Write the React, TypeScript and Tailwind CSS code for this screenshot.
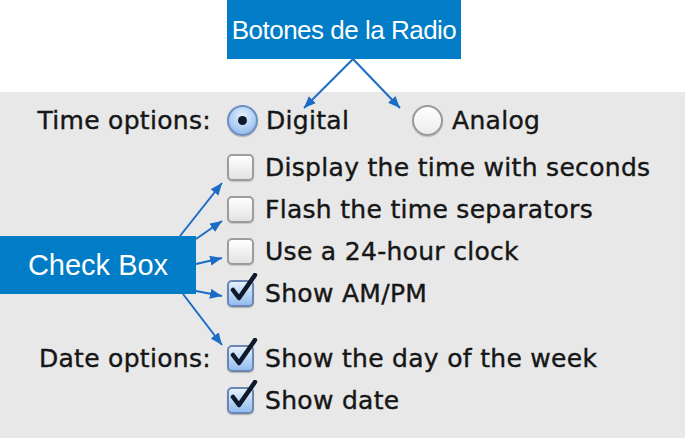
const rowText =
  "text-[25px] tracking-[0.3px] text-[#161616] leading-none [-webkit-text-stroke:0.4px_#161616]";

function Radio({ checked }: { checked?: boolean }) {
  return (
    <span
      className={
        checked
          ? "flex h-[31px] w-[31px] items-center justify-center rounded-full border-2 border-[#6f8fbf] bg-[radial-gradient(circle_at_50%_35%,#e6f1fd_0%,#a9cbf2_60%,#7fadea_100%)] shadow-[0_1px_1px_rgba(0,0,0,0.25)]"
          : "flex h-[31px] w-[31px] items-center justify-center rounded-full border-2 border-[#9a9a9a] bg-[linear-gradient(#ffffff,#ececec)] shadow-[0_1px_1px_rgba(0,0,0,0.2)]"
      }
    >
      {checked && <span className="h-[9px] w-[9px] rounded-full bg-[#0f1b2e]" />}
    </span>
  );
}

function Check({ checked }: { checked?: boolean }) {
  return (
    <span className="relative flex h-[28px] w-[28px] items-center justify-start">
      <span
        className={
          checked
            ? "h-[27px] w-[27px] rounded-[5px] border-2 border-[#6a87b4] bg-[linear-gradient(#e4f0fd,#b7d3f5_55%,#96bdee)] shadow-[0_1px_1px_rgba(0,0,0,0.25)]"
            : "h-[27px] w-[27px] rounded-[5px] border-2 border-[#9c9c9c] bg-[linear-gradient(#ffffff,#eeeeee_60%,#e2e2e2)] shadow-[0_1px_1px_rgba(0,0,0,0.15)]"
        }
      />
      {checked && (
        <svg
          className="absolute left-0 top-[-6px]"
          width="32"
          height="32"
          viewBox="0 0 32 32"
        >
          <path
            d="M6 17 L12 25 L28 2"
            fill="none"
            stroke="#0e1a2c"
            strokeWidth="4.5"
            strokeLinecap="round"
            strokeLinejoin="round"
          />
        </svg>
      )}
    </span>
  );
}

function Row({
  label,
  className,
  children,
}: {
  label?: string;
  className?: string;
  children: React.ReactNode;
}) {
  return (
    <div className={"flex h-[42px] items-center " + (className ?? "")}>
      <div className={"w-[211px] text-right " + rowText}>{label}</div>
      <div className="ml-[16px] flex items-center">{children}</div>
    </div>
  );
}

function CheckRow({
  label,
  text,
  checked,
  className,
}: {
  label?: string;
  text: string;
  checked?: boolean;
  className?: string;
}) {
  return (
    <Row label={label} className={className}>
      <Check checked={checked} />
      <span className={"ml-[10px] " + rowText}>{text}</span>
    </Row>
  );
}

export default function App() {
  // annotation arrows: [x1, y1, x2, y2]
  const arrows: [number, number, number, number][] = [
    [353, 59, 304, 108],
    [353, 59, 400, 108],
    [180, 236, 222, 183],
    [196, 239, 222, 221],
    [196, 264, 222, 258],
    [196, 291, 222, 296],
    [183, 294, 222, 345],
  ];

  return (
    <div className="relative h-[438px] w-[685px] overflow-hidden bg-white font-['DejaVu_Sans',sans-serif]">
      <div className="h-[92px] pl-[227px]">
        <div className="flex h-[59px] w-[234px] items-center justify-center bg-[#007dc6] font-['Liberation_Sans',Arial,sans-serif] text-[26px] leading-none tracking-[-0.5px] text-white">
          Botones de la Radio
        </div>
      </div>

      <div className="h-[346px] bg-[#e8e8e8] pt-[7px]">
        <Row label="Time options:">
          <div className="flex w-[185px] items-center">
            <Radio checked />
            <span className={"ml-[8px] " + rowText}>Digital</span>
          </div>
          <Radio />
          <span className={"ml-[9px] " + rowText}>Analog</span>
        </Row>
        <CheckRow className="mt-[5px]" text="Display the time with seconds" />
        <CheckRow text="Flash the time separators" />
        <CheckRow text="Use a 24-hour clock" />
        <CheckRow text="Show AM/PM" checked />
        <CheckRow
          className="mt-[23px]"
          label="Date options:"
          text="Show the day of the week"
          checked
        />
        <CheckRow text="Show date" checked />
      </div>

      <div className="absolute left-0 top-[236px] flex h-[58px] w-[196px] items-center justify-center bg-[#007dc6] font-['Liberation_Sans',Arial,sans-serif] text-[29px] leading-none text-white">
        Check Box
      </div>

      <svg
        className="pointer-events-none absolute inset-0"
        width="685"
        height="438"
        viewBox="0 0 685 438"
      >
        <defs>
          <marker
            id="head"
            markerUnits="userSpaceOnUse"
            markerWidth="13"
            markerHeight="11"
            refX="12"
            refY="5"
            orient="auto"
          >
            <path d="M0 0 L12 5 L0 10 Z" fill="#1a6cc6" />
          </marker>
        </defs>
        {arrows.map(([x1, y1, x2, y2], i) => (
          <line
            key={i}
            x1={x1}
            y1={y1}
            x2={x2}
            y2={y2}
            stroke="#1a6cc6"
            strokeWidth="2"
            markerEnd="url(#head)"
          />
        ))}
      </svg>
    </div>
  );
}
